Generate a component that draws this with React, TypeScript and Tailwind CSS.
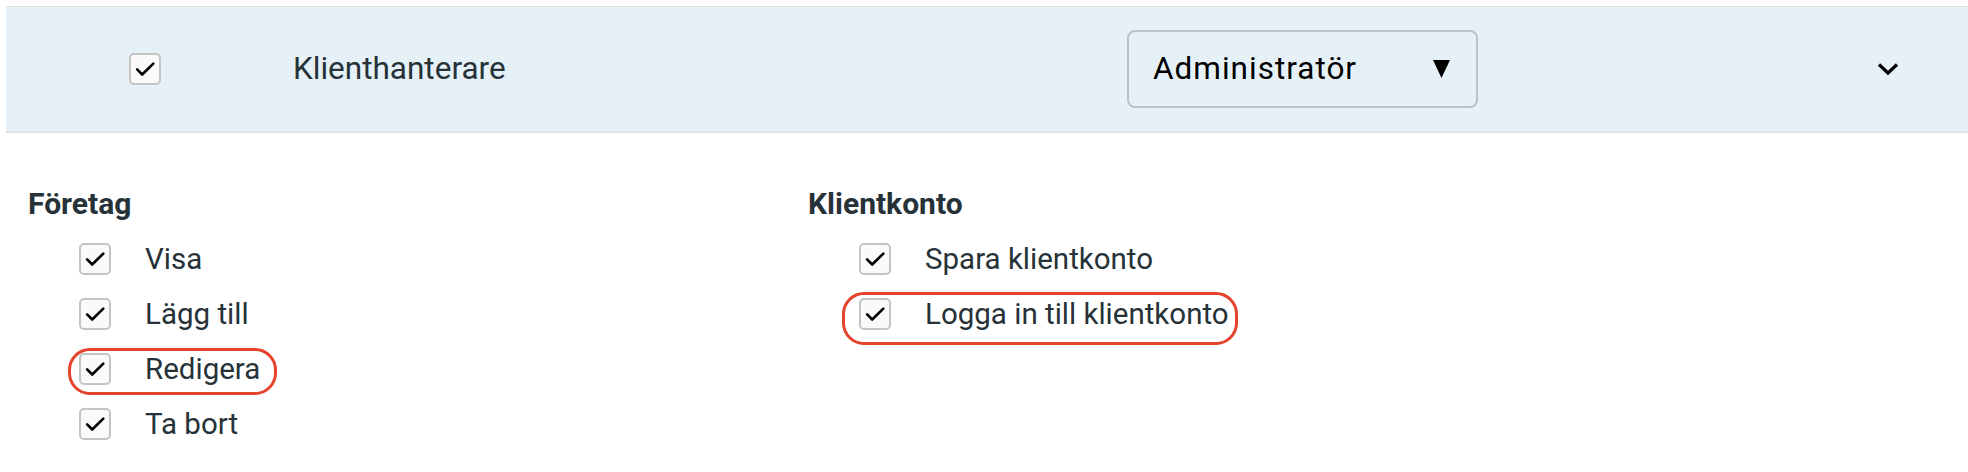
import React from 'react';

const font = { fontFamily: 'Roboto, "Noto Sans", sans-serif' };

function Box() {
  return (
    <div className="flex h-8 w-8 shrink-0 items-center justify-center rounded-[5px] border-2 border-[#c2c4c6] bg-[#fafafa]">
      <svg width="32" height="32" viewBox="0 0 32 32" fill="none">
        <path d="M7 16.5L12.8 22.3L25.5 9.8" stroke="#000" strokeWidth="3" strokeLinecap="round" strokeLinejoin="round" />
      </svg>
    </div>
  );
}

type Perm = { label: string; mark?: 'left' | 'right' };

function Row({ label, mark }: Perm) {
  return (
    <div className="relative flex h-8 items-center">
      {mark === 'left' && (
        <div className="absolute left-[-11px] top-[-5px] h-[47px] w-[209px] rounded-[22px] border-[3px] border-[#e6432c]" />
      )}
      {mark === 'right' && (
        <div className="absolute left-[-17px] top-[-6px] h-[53px] w-[396px] rounded-[22px] border-[3px] border-[#e6432c]" />
      )}
      <Box />
      <span className="ml-[34px] text-[29.5px] leading-9 text-[#263238]">{label}</span>
    </div>
  );
}

function Group({ title, items }: { title: string; items: Perm[] }) {
  return (
    <div className="w-[780px]">
      <h3 className="text-[30px] font-bold leading-9 text-[#263238]">{title}</h3>
      <div className="mt-[21px] flex flex-col gap-[23px] pl-[51px]">
        {items.map((it) => (
          <Row key={it.label} {...it} />
        ))}
      </div>
    </div>
  );
}

export default function App() {
  return (
    <div className="h-[472px] w-[1968px] overflow-hidden bg-white" style={font}>
      {/* Role header */}
      <div className="ml-[6px] mt-[6px] flex h-[127px] items-center border-b-2 border-t border-[#dfe2e5] bg-[#e5f1f6] pl-[123px]">
        <Box />
        <span className="ml-[132px] w-[834px] text-[31.5px] text-[#263238]">Klienthanterare</span>
        <div className="flex h-[78px] w-[351px] items-center justify-between rounded-[8px] border-2 border-[#bfc2c4] pl-[24px] pr-[26px]">
          <span className="text-[31.5px] tracking-[1px] text-black">Administratör</span>
          <svg width="17" height="18" viewBox="0 0 17 18">
            <polygon points="0,0 17,0 8.5,18" fill="#000" />
          </svg>
        </div>
        <svg className="ml-[399px]" width="22" height="14" viewBox="0 0 22 14" fill="none">
          <path d="M2 2.5L11 11L20 2.5" stroke="#000" strokeWidth="3.2" />
        </svg>
      </div>

      {/* Permissions */}
      <div className="flex pl-[28px] pt-[53px]">
        <Group
          title="Företag"
          items={[
            { label: 'Visa' },
            { label: 'Lägg till' },
            { label: 'Redigera', mark: 'left' },
            { label: 'Ta bort' },
          ]}
        />
        <Group
          title="Klientkonto"
          items={[
            { label: 'Spara klientkonto' },
            { label: 'Logga in till klientkonto', mark: 'right' },
          ]}
        />
      </div>
    </div>
  );
}
